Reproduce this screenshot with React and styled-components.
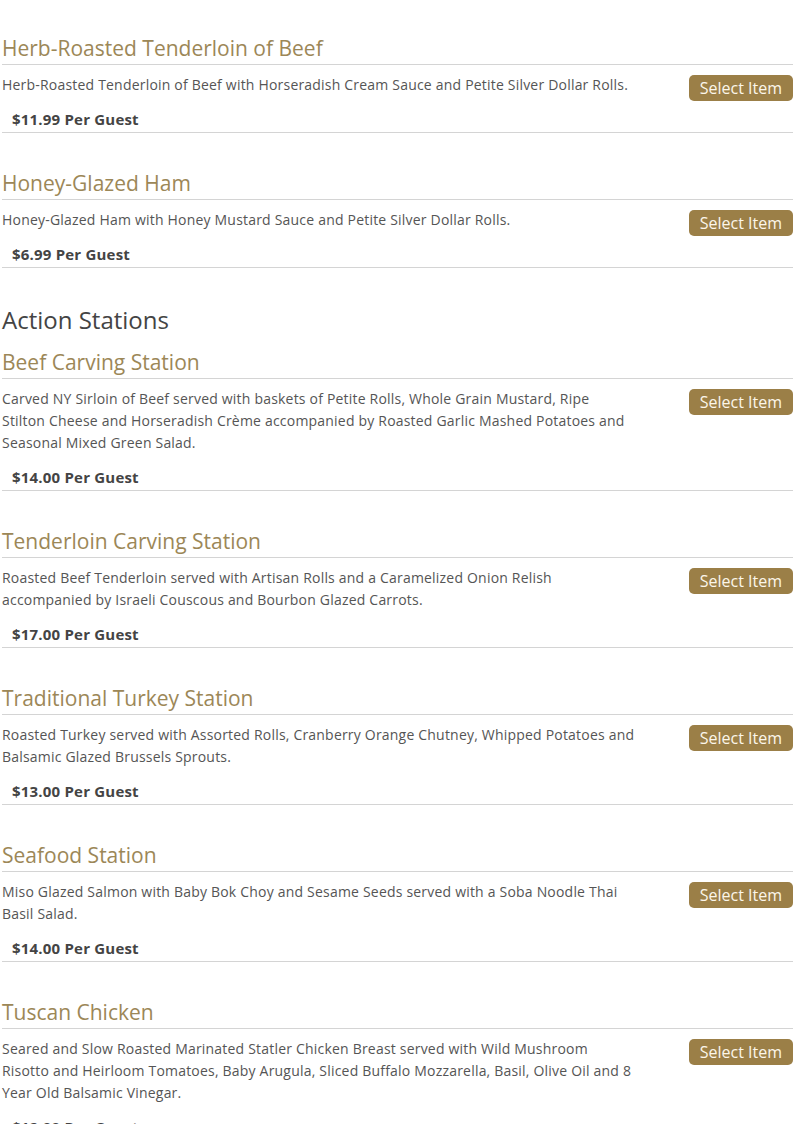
import React from "react";
import styled, { createGlobalStyle } from "styled-components";

const Global = createGlobalStyle`
  html, body { margin: 0; padding: 0; background: #fff; }
  body { font-family: "Open Sans", "Liberation Sans", sans-serif; }
`;

const Page = styled.div`
  padding: 0 2px;
  width: 791px;
`;

const SectionHeading = styled.h2`
  margin: 37px 0 0;
  font-size: 24px;
  line-height: 30px;
  font-weight: 400;
  color: #444;
`;

const Item = styled.div`
  padding-top: ${(p) => p.$top}px;
  border-bottom: 1px solid #d4d4d4;
`;

const Title = styled.h3`
  margin: 0;
  font-size: 21px;
  line-height: 24px;
  font-weight: 400;
  color: #9c8757;
  padding-bottom: 4px;
  border-bottom: 1px solid #d4d4d4;
`;

const Row = styled.div`
  display: flex;
  justify-content: space-between;
  align-items: flex-start;
  margin-top: 9px;
`;

const Desc = styled.p`
  margin: 0;
  width: 633px;
  font-size: 14px;
  line-height: 22px;
  letter-spacing: 0.2px;
  color: #555;
`;

const SelectButton = styled.button`
  margin: 1px 0 -5px;
  height: 26px;
  padding: 0 11px;
  border: none;
  border-radius: 5px;
  background: #9b7f47;
  color: #fbf6ea;
  font-family: "Open Sans", "Liberation Sans", sans-serif;
  font-size: 16px;
  line-height: 26px;
  cursor: pointer;
  white-space: nowrap;
`;

const Price = styled.div`
  margin-top: 12px;
  padding: 0 0 2px 10px;
  font-size: 15px;
  line-height: 22px;
  font-weight: 700;
  letter-spacing: 0.2px;
  color: #444;
`;

const MenuItem = ({ top, title, desc, price }) => (
  <Item $top={top}>
    <Title>{title}</Title>
    <Row>
      <Desc>{desc}</Desc>
      <SelectButton>Select Item</SelectButton>
    </Row>
    <Price>{price} Per Guest</Price>
  </Item>
);

const carving = [
  {
    title: "Herb-Roasted Tenderloin of Beef",
    desc: "Herb-Roasted Tenderloin of Beef with Horseradish Cream Sauce and Petite Silver Dollar Rolls.",
    price: "$11.99",
  },
  {
    title: "Honey-Glazed Ham",
    desc: "Honey-Glazed Ham with Honey Mustard Sauce and Petite Silver Dollar Rolls.",
    price: "$6.99",
  },
];

const stations = [
  {
    title: "Beef Carving Station",
    desc: "Carved NY Sirloin of Beef served with baskets of Petite Rolls, Whole Grain Mustard, Ripe Stilton Cheese and Horseradish Crème accompanied by Roasted Garlic Mashed Potatoes and Seasonal Mixed Green Salad.",
    price: "$14.00",
  },
  {
    title: "Tenderloin Carving Station",
    desc: "Roasted Beef Tenderloin served with Artisan Rolls and a Caramelized Onion Relish accompanied by Israeli Couscous and Bourbon Glazed Carrots.",
    price: "$17.00",
  },
  {
    title: "Traditional Turkey Station",
    desc: "Roasted Turkey served with Assorted Rolls, Cranberry Orange Chutney, Whipped Potatoes and Balsamic Glazed Brussels Sprouts.",
    price: "$13.00",
  },
  {
    title: "Seafood Station",
    desc: "Miso Glazed Salmon with Baby Bok Choy and Sesame Seeds served with a Soba Noodle Thai Basil Salad.",
    price: "$14.00",
  },
  {
    title: "Tuscan Chicken",
    desc: "Seared and Slow Roasted Marinated Statler Chicken Breast served with Wild Mushroom Risotto and Heirloom Tomatoes, Baby Arugula, Sliced Buffalo Mozzarella, Basil, Olive Oil and 8 Year Old Balsamic Vinegar.",
    price: "$12.00",
  },
];

export default function App() {
  return (
    <>
      <Global />
      <Page>
        {carving.map((it, i) => (
          <MenuItem key={it.title} top={i === 0 ? 36 : 38} {...it} />
        ))}
        <SectionHeading>Action Stations</SectionHeading>
        {stations.map((it, i) => (
          <MenuItem key={it.title} top={i === 0 ? 15 : 38} {...it} />
        ))}
      </Page>
    </>
  );
}
